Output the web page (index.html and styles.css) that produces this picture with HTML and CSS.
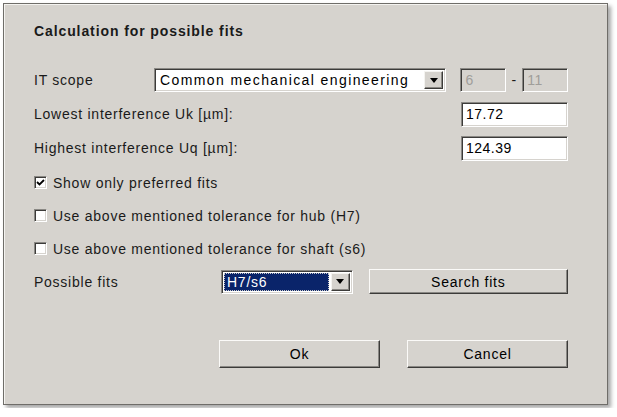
FILE: index.html
```html
<!DOCTYPE html>
<html lang="en">
<head>
    <meta charset="UTF-8">
    <title>Calculation for possible fits</title>
    <link rel="stylesheet" href="styles.css">
</head>
<body>
    <div class="dialog">
        <div class="title">Calculation for possible fits</div>

        <div class="row row-scope">
            <span class="label label-scope">IT scope</span>
            <div class="combo combo-scope">
                <span class="combo-text">Common mechanical engineering</span>
                <span class="drop"><i></i></span>
            </div>
            <div class="field field-it it-from disabled">6</div>
            <span class="dash">-</span>
            <div class="field field-it disabled">11</div>
        </div>

        <div class="row">
            <span class="label">Lowest interference Uk [µm]:</span>
            <div class="field field-num">17.72</div>
        </div>

        <div class="row">
            <span class="label">Highest interference Uq [µm]:</span>
            <div class="field field-num">124.39</div>
        </div>

        <label class="row check-row first-check">
            <span class="check">
                <svg width="9" height="9" viewBox="0 0 9 9"><path d="M1 4 L3.5 6.5 L8 2" fill="none" stroke="#000" stroke-width="1.8"/></svg>
            </span>
            <span>Show only preferred fits</span>
        </label>
        <label class="row check-row">
            <span class="check"></span>
            <span>Use above mentioned tolerance for hub (H7)</span>
        </label>
        <label class="row check-row">
            <span class="check"></span>
            <span>Use above mentioned tolerance for shaft (s6)</span>
        </label>

        <div class="row row-fits">
            <span class="label label-fits">Possible fits</span>
            <div class="combo combo-fits">
                <span class="combo-text selected">H7/s6</span>
                <span class="drop"><i></i></span>
            </div>
            <button class="btn btn-search">Search fits</button>
        </div>

        <div class="row row-actions">
            <button class="btn btn-ok">Ok</button>
            <button class="btn btn-cancel">Cancel</button>
        </div>
    </div>
</body>
</html>
```

FILE: styles.css
```css
* {
    box-sizing: border-box;
}
body {
    margin: 0;
    background: #fff;
    font-family: 'Liberation Sans', Arial, sans-serif;
    font-size: 14px;
    letter-spacing: 0.75px;
    color: #1a1a1a;
}
.dialog {
    margin: 3px;
    width: 605px;
    height: 402px;
    padding: 18px 39px 0 30px;
    background: #d6d3ce;
    border: 1px solid #6f6d69;
    box-shadow: inset 1px 1px #f4f3f0, 3px 3px 4px rgba(0, 0, 0, .35);
    display: flex;
    flex-direction: column;
}
.title {
    height: 18px;
    line-height: 18px;
    font-weight: bold;
    letter-spacing: 0.9px;
    margin-bottom: 23px;
}
.row {
    display: flex;
    align-items: center;
    height: 34px;
}
.label {
    flex: 1;
}
.label-scope {
    flex: none;
    width: 120px;
}
.label-fits {
    flex: none;
    width: 187px;
}

/* sunken boxes: text fields, combos, checkboxes */
.field,
.combo,
.check {
    background: #fff;
    border: 1px solid;
    border-color: #8a8884 #fff #fff #8a8884;
    box-shadow: inset 1px 1px #3c3b39, inset -1px -1px #d6d3ce;
}
.field {
    height: 25px;
    line-height: 23px;
    padding: 0 4px;
    color: #000;
    letter-spacing: 0.5px;
}
.field-num {
    width: 107px;
}
.field-it {
    width: 46px;
    height: 24px;
}
.it-from {
    margin-left: 14px;
}
.disabled {
    background: #d6d3ce;
    color: #a09e9a;
}
.dash {
    width: 16px;
    text-align: center;
}
.combo {
    height: 24px;
    display: flex;
    align-items: stretch;
    padding: 2px;
}
.combo-scope {
    width: 294px;
}
.combo-scope .combo-text {
    letter-spacing: 1.4px;
}
.combo-fits {
    width: 132px;
}
.combo-text {
    flex: 1;
    line-height: 18px;
    padding: 0 3px;
    color: #000;
    white-space: nowrap;
    overflow: hidden;
}
.combo-text.selected {
    background: #0a246a;
    color: #fff;
    outline: 1px dotted #c8c8c8;
    outline-offset: -1px;
    margin-right: 2px;
}
.drop {
    width: 19px;
    background: #d6d3ce;
    border: 1px solid;
    border-color: #f4f3f0 #3c3b39 #3c3b39 #f4f3f0;
    box-shadow: inset -1px -1px #8a8884;
    display: flex;
    align-items: center;
    justify-content: center;
}
.drop i {
    border-left: 4px solid transparent;
    border-right: 4px solid transparent;
    border-top: 5px solid #000;
}

.check-row {
    height: 33px;
}
.first-check {
    margin-top: 1px;
}
.check {
    width: 13px;
    height: 13px;
    margin-right: 6px;
    display: flex;
    align-items: center;
    justify-content: center;
}
.check svg {
    display: block;
}
.row-fits {
    height: 33px;
}

/* raised push buttons */
.btn {
    font: inherit;
    letter-spacing: inherit;
    color: #000;
    background: #d6d3ce;
    border: 1px solid;
    border-color: #fbfaf8 #3c3b39 #3c3b39 #fbfaf8;
    box-shadow: inset -1px -1px #8a8884;
    padding: 0;
}
.btn-search {
    width: 200px;
    height: 25px;
    margin-left: 16px;
}
.row-actions {
    margin-top: 42px;
    height: 28px;
    padding-left: 185px;
    gap: 27px;
}
.btn-ok,
.btn-cancel {
    width: 162px;
    height: 28px;
}
```
